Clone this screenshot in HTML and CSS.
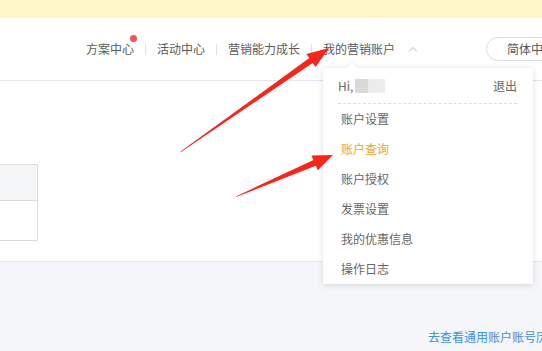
FILE: index.html
```html
<!DOCTYPE html>
<html lang="zh-CN">
<head>
	<meta charset="UTF-8">
	<title>我的营销账户</title>
	<link rel="stylesheet" href="styles.css">
</head>
<body>
	<div class="notice"></div>
	<div class="header">
		<a href="javascript:;" class="nav-item">方案中心<i class="dot"></i></a>
		<span class="nav-sep"></span>
		<a href="javascript:;" class="nav-item">活动中心</a>
		<span class="nav-sep"></span>
		<a href="javascript:;" class="nav-item">营销能力成长</a>
		<span class="nav-sep"></span>
		<a href="javascript:;" class="nav-item">我的营销账户</a>
		<svg class="caret" width="10" height="6" viewBox="0 0 10 6"><path d="M1 5.5 L5 1.5 L9 5.5" fill="none" stroke="#b9bcc2" stroke-width="1"/></svg>
		<a href="javascript:;" class="lang">简体中文</a>
	</div>

	<div class="menu">
		<div class="menu-head">
			<span class="hi">Hi,<i class="blur"></i></span>
			<a href="javascript:;" class="logout">退出</a>
		</div>
		<ul>
			<li>账户设置</li>
			<li class="on">账户查询</li>
			<li>账户授权</li>
			<li>发票设置</li>
			<li>我的优惠信息</li>
			<li>操作日志</li>
		</ul>
	</div>

	<div class="main">
		<div class="table">
			<div class="thead"></div>
			<div class="tbody"></div>
		</div>
	</div>
	<div class="foot">
		<a href="javascript:;" class="link">去查看通用账户账号历史记录</a>
	</div>

	<svg class="arrows" width="542" height="351" viewBox="0 0 542 351">
		<polygon points="181,152 312.7,63.1 315.6,67.1 329,48 306.4,54.1 309.3,58.1 180.5,151.5" fill="#f5261a"/>
		<polygon points="236,197 315.8,165.7 317.8,170.2 333,155 311.4,155.6 313.4,160.1 235.7,196.4" fill="#f5261a"/>
	</svg>
</body>
</html>
```

FILE: styles.css
```css
body,div,ul,li,a,span,i{margin:0;padding:0;border:0;}
li{list-style:none;}
a{text-decoration:none;}
i{font-style:normal;}
body{width:542px;height:351px;overflow:hidden;position:relative;font-family:"Noto Sans CJK SC","Noto Sans",sans-serif;font-size:12px;color:#555;background:#f5f6f9;}

.notice{height:18px;background:#fdf6c9;}

.header{height:62px;background:#fff;border-bottom:1px solid #e1e6ef;display:flex;align-items:center;padding-left:75px;white-space:nowrap;}
.nav-item{position:relative;padding:0 11px;line-height:20px;color:#5a5a5a;flex-shrink:0;}
.nav-sep{width:1px;height:11px;background:#dbe2ec;flex-shrink:0;}
.dot{position:absolute;right:8px;top:-4px;width:7px;height:7px;border-radius:50%;background:#f2545b;}
.caret{margin-left:2px;flex-shrink:0;}
.lang{margin-left:68px;flex-shrink:0;height:24px;line-height:22px;box-sizing:border-box;padding:0 20px;border:1px solid #dcdde0;border-radius:12px;color:#555;}

.menu{position:absolute;left:323px;top:68px;width:210px;box-sizing:border-box;padding:0 16px 0 15px;background:#fff;box-shadow:0 1px 6px rgba(0,0,0,.14);z-index:5;}
.menu:before{content:"";position:absolute;left:25px;top:-4px;width:8px;height:8px;background:#fff;transform:rotate(45deg);box-shadow:-1px -1px 2px rgba(0,0,0,.06);}
.menu-head{position:relative;height:35px;display:flex;align-items:center;justify-content:space-between;border-bottom:1px dashed #dedede;}
.hi{display:flex;align-items:center;color:#666;}
.blur{display:inline-block;width:30px;height:14px;margin-left:2px;background:linear-gradient(90deg,#dadada 0,#dadada 45%,#ebebeb 45%,#eeeeee 100%);}
.logout{color:#666;}
.menu li{height:30px;line-height:30px;padding-left:3px;color:#666;}
.menu li.on{color:#f5a31d;}

.main{height:180px;background:#fff;border-bottom:1px solid #e4e7ed;overflow:hidden;}
.table{width:37px;margin-top:83px;border:1px solid #dcdcdc;border-left:none;}
.thead{height:35px;background:#f5f6f8;border-bottom:1px solid #dcdcdc;}
.tbody{height:39px;}

.foot{padding:65px 0 0 428px;white-space:nowrap;}
.link{line-height:20px;color:#3d8fe0;}

.arrows{position:absolute;left:0;top:0;z-index:9;pointer-events:none;}
```
